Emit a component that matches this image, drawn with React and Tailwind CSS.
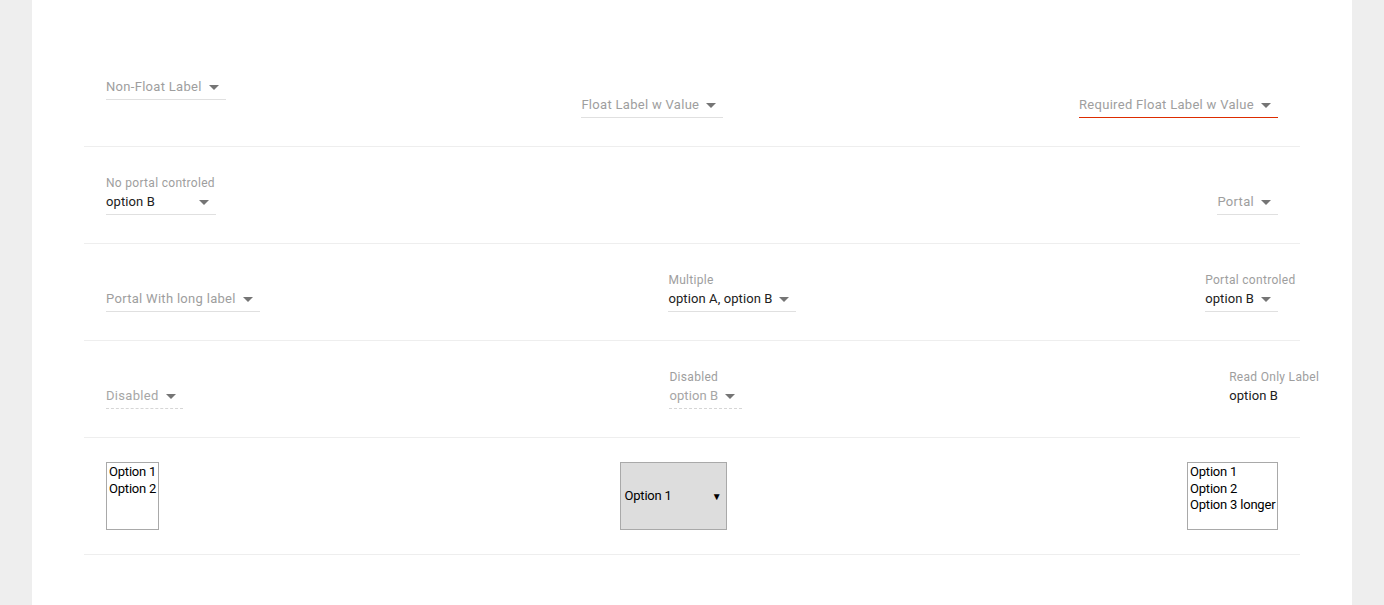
import React from "react";

const Arrow = () => (
  <span className="inline-block w-0 h-0 border-l-[5px] border-r-[5px] border-t-[5px] border-l-transparent border-r-transparent border-t-[#757575] shrink-0" />
);

function MdSelect({ label, value, placeholder, float = true, required, disabled, readOnly, width = "" }) {
  const text = value || placeholder;
  const textColor = disabled ? "text-[#a6a6a6]" : value ? "text-[#212121]" : "text-[#9e9e9e]";
  const tracking = value ? "tracking-[0.1px]" : "tracking-[0.3px]";
  let underline = "border-b border-b-[#e0e0e0]";
  if (required) underline = "border-b border-b-[#dd2c00]";
  if (disabled) underline = "border-b border-dashed border-b-[#d6d6d6]";
  if (readOnly) underline = "border-b border-b-transparent";
  return (
    <div className={`inline-flex flex-col ${width}`}>
      {float && (
        <div className="h-[18px] w-0 overflow-visible flex items-center text-[12px] tracking-[0.3px] text-[#9e9e9e] whitespace-nowrap">
          {label}
        </div>
      )}
      <div className={`h-[23px] flex items-start ${underline}`}>
        <div className={`h-[20px] flex items-center w-full ${readOnly ? "" : "pr-[7px]"}`}>
          <span className={`flex-1 text-[13px] ${tracking} whitespace-nowrap ${textColor}`}>{text}</span>
          {!readOnly && (
            <span className="ml-[7px] flex items-center">
              <Arrow />
            </span>
          )}
        </div>
      </div>
    </div>
  );
}

function Row({ children }) {
  return (
    <div className="flex justify-between items-start px-[22px] pt-[27px] pb-[28px] border-b border-[#eeeeee]">
      {children}
    </div>
  );
}

function ListBox({ options, w }) {
  return (
    <div className={`h-[68px] ${w} border border-[#a9a9a9] bg-white pt-[1px] px-[2px] font-['Roboto',sans-serif] text-[13px] tracking-[-0.2px] leading-[16.5px] text-black`}>
      {options.map((o) => (
        <div key={o} className="whitespace-nowrap">{o}</div>
      ))}
    </div>
  );
}

export default function App() {
  return (
    <div className="min-h-[605px] bg-[#eeeeee] px-[32px] font-['Roboto',sans-serif]">
      <div className="bg-white min-h-[605px] px-[52px] pt-[50px]">
        <Row>
          <MdSelect float={false} placeholder="Non-Float Label" />
          <MdSelect placeholder="Float Label w Value" />
          <MdSelect placeholder="Required Float Label w Value" required />
        </Row>
        <Row>
          <MdSelect label="No portal controled" value="option B" width="w-[110px]" />
          <MdSelect placeholder="Portal" />
        </Row>
        <Row>
          <MdSelect placeholder="Portal With long label" />
          <MdSelect label="Multiple" value="option A, option B" />
          <MdSelect label="Portal controled" value="option B" />
        </Row>
        <Row>
          <MdSelect placeholder="Disabled" disabled />
          <MdSelect label="Disabled" value="option B" disabled />
          <MdSelect label="Read Only Label" value="option B" readOnly />
        </Row>
        <div className="flex justify-between items-start px-[22px] py-[24px] border-b border-[#eeeeee]">
          <ListBox options={["Option 1", "Option 2"]} w="w-[53px]" />
          <div className="h-[68px] w-[107px] border border-[#a9a9a9] bg-[#dddddd] flex items-center justify-between pl-[4px] pr-[4px] font-['Roboto',sans-serif] text-[13px] tracking-[-0.2px] text-black">
            <span>Option 1</span>
            <span className="text-[10px]">▼</span>
          </div>
          <ListBox options={["Option 1", "Option 2", "Option 3 longer"]} w="w-[91px]" />
        </div>
      </div>
    </div>
  );
}
